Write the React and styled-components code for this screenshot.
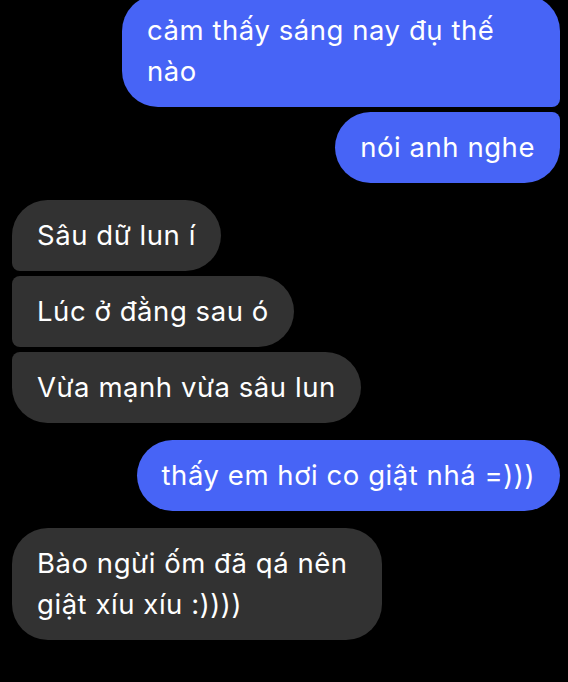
import styled, { createGlobalStyle, css } from "styled-components";

const GlobalStyle = createGlobalStyle`
  html, body {
    margin: 0;
    padding: 0;
    background: #000;
  }
  body {
    font-family: Inter, "Noto Sans", "DejaVu Sans", sans-serif;
    -webkit-font-smoothing: antialiased;
  }
`;

const Thread = styled.div`
  width: 568px;
  height: 682px;
  overflow: hidden;
  box-sizing: border-box;
  padding: 0 8px 0 12px;
  display: flex;
  flex-direction: column;
  gap: 17px;
  margin-top: -5px;
`;

const Group = styled.div`
  display: flex;
  flex-direction: column;
  align-items: ${(p) => (p.$mine ? "flex-end" : "flex-start")};
  gap: 5px;
`;

const BIG = 36;
const SMALL = 8;

const Bubble = styled.div`
  box-sizing: border-box;
  max-width: ${(p) => p.$max}px;
  padding: 15px 25px;
  font-size: 27.5px;
  line-height: 41px;
  color: #fff;
  letter-spacing: 0.55px;
  background: ${(p) => (p.$mine ? "#4764f6" : "#323232")};
  border-radius: ${BIG}px;

  ${(p) =>
    p.$mine &&
    css`
      ${p.$pos === "first" && `border-bottom-right-radius: ${SMALL}px;`}
      ${p.$pos === "middle" &&
      `border-top-right-radius: ${SMALL}px; border-bottom-right-radius: ${SMALL}px;`}
      ${p.$pos === "last" && `border-top-right-radius: ${SMALL}px;`}
    `}

  ${(p) =>
    !p.$mine &&
    css`
      ${p.$pos === "first" && `border-bottom-left-radius: ${SMALL}px;`}
      ${p.$pos === "middle" &&
      `border-top-left-radius: ${SMALL}px; border-bottom-left-radius: ${SMALL}px;`}
      ${p.$pos === "last" && `border-top-left-radius: ${SMALL}px;`}
    `}
`;

const groups = [
  { mine: true, max: 438, msgs: ["cảm thấy sáng nay đụ thế nào", "nói anh nghe"] },
  { mine: false, max: 438, msgs: ["Sâu dữ lun í", "Lúc ở đằng sau ó", "Vừa mạnh vừa sâu lun"] },
  { mine: true, max: 438, msgs: ["thấy em hơi co giật nhá =)))"] },
  { mine: false, max: 370, msgs: ["Bào ngừi ốm đã qá nên giật xíu xíu :))))"] },
];

const position = (i, n) => {
  if (n === 1) return "single";
  if (i === 0) return "first";
  if (i === n - 1) return "last";
  return "middle";
};

export default function App() {
  return (
    <>
      <GlobalStyle />
      <Thread>
        {groups.map((g, gi) => (
          <Group key={gi} $mine={g.mine}>
            {g.msgs.map((m, i) => (
              <Bubble key={i} $mine={g.mine} $max={g.max} $pos={position(i, g.msgs.length)}>
                {m}
              </Bubble>
            ))}
          </Group>
        ))}
      </Thread>
    </>
  );
}
